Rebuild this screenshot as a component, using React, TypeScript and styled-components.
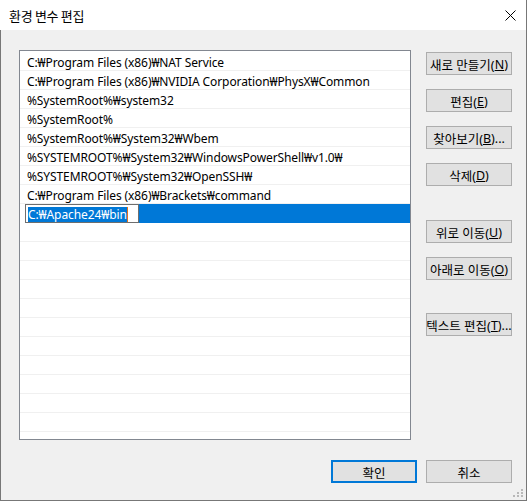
import React from "react";
import styled, { createGlobalStyle } from "styled-components";

const GlobalStyle = createGlobalStyle`
  html, body {
    margin: 0;
    padding: 0;
    background: #ffffff;
  }
  body {
    font-family: "Noto Sans", "Noto Sans CJK KR", sans-serif;
    font-size: 12px;
    color: #000000;
  }
`;

const paths = [
  "C:₩Program Files (x86)₩NAT Service",
  "C:₩Program Files (x86)₩NVIDIA Corporation₩PhysX₩Common",
  "%SystemRoot%₩system32",
  "%SystemRoot%",
  "%SystemRoot%₩System32₩Wbem",
  "%SYSTEMROOT%₩System32₩WindowsPowerShell₩v1.0₩",
  "%SYSTEMROOT%₩System32₩OpenSSH₩",
  "C:₩Program Files (x86)₩Brackets₩command",
];

type SideButton = { label: string; key: string; tail?: string; space: number };

const sideButtons: SideButton[] = [
  { label: "새로 만들기", key: "N", space: 0 },
  { label: "편집", key: "E", space: 14 },
  { label: "찾아보기", key: "B", tail: "...", space: 14 },
  { label: "삭제", key: "D", space: 14 },
  { label: "위로 이동", key: "U", space: 34 },
  { label: "아래로 이동", key: "O", space: 14 },
  { label: "텍스트 편집", key: "T", tail: "...", space: 33 },
];

export default function App() {
  const emptyRows = 13;
  return (
    <Window>
      <GlobalStyle />
      <TitleBar>
        <Title>환경 변수 편집</Title>
        <CloseIcon width="11" height="11" viewBox="0 0 11 11">
          <path d="M0.5 0.5 L10.5 10.5 M10.5 0.5 L0.5 10.5" stroke="#000" strokeWidth="1" />
        </CloseIcon>
      </TitleBar>
      <Body>
        <Main>
          <List>
            {paths.map((p) => (
              <Row key={p}>{p}</Row>
            ))}
            <SelectedRow>
              <EditBox>
                <Highlight>C:₩Apache24₩bin</Highlight>
                <Caret />
              </EditBox>
              <SelectionFill />
            </SelectedRow>
            {Array.from({ length: emptyRows }).map((_, i) => (
              <Row key={"e" + i} />
            ))}
          </List>
          <Side>
            {sideButtons.map((b) => (
              <Button key={b.key} $space={b.space}>
                {b.label}(<u>{b.key}</u>){b.tail}
              </Button>
            ))}
          </Side>
        </Main>
        <Footer>
          <Button $default>확인</Button>
          <Button>취소</Button>
        </Footer>
        <Grip width="11" height="9" viewBox="0 0 11 9">
          <rect x="8" y="0" width="2" height="2" fill="#b8b8b8" />
          <rect x="4" y="3" width="2" height="2" fill="#b8b8b8" />
          <rect x="8" y="3" width="2" height="2" fill="#b8b8b8" />
          <rect x="0" y="6" width="2" height="2" fill="#b8b8b8" />
          <rect x="4" y="6" width="2" height="2" fill="#b8b8b8" />
          <rect x="8" y="6" width="2" height="2" fill="#b8b8b8" />
        </Grip>
      </Body>
    </Window>
  );
}

const Window = styled.div`
  width: 527px;
  height: 501px;
  display: flex;
  flex-direction: column;
  box-sizing: border-box;
`;

const TitleBar = styled.div`
  height: 30px;
  flex: none;
  background: #ffffff;
  display: flex;
  align-items: center;
  justify-content: space-between;
  padding: 0 10px 0 9px;
  border-right: 1px solid #777777;
`;

const Title = styled.div`
  font-size: 13px;
  letter-spacing: -0.3px;
  padding-top: 1px;
  font-family: "Noto Sans CJK KR", sans-serif;
`;

const CloseIcon = styled.svg`
  display: block;
  margin-top: 1px;
`;

const Body = styled.div`
  position: relative;
  flex: 1;
  background: #f0f0f0;
  border: 1px solid #777777;
  border-top: none;
  padding: 20px 14px 0 18px;
  display: flex;
  flex-direction: column;
`;

const Main = styled.div`
  display: flex;
  gap: 15px;
`;

const List = styled.div`
  width: 390px;
  height: 387px;
  padding-top: 1px;
  border: 1px solid #828790;
  background: #ffffff;
  overflow: hidden;
`;

const Row = styled.div`
  height: 16px;
  padding-top: 2px;
  line-height: 17px;
  padding-left: 7px;
  border-bottom: 1px solid #f0f0f0;
  white-space: nowrap;
  overflow: hidden;
  letter-spacing: -0.1px;
`;

const SelectedRow = styled.div`
  height: 19px;
  display: flex;
  padding-left: 5px;
  background: #ffffff;
`;

const EditBox = styled.div`
  width: 114px;
  height: 19px;
  box-sizing: border-box;
  border: 1px solid #6e6e6e;
  background: #ffffff;
  display: flex;
  align-items: center;
  padding: 1px 0 0 2px;
`;

const Highlight = styled.span`
  background: #0078d7;
  color: #ffffff;
  line-height: 15px;
  white-space: nowrap;
  letter-spacing: -0.1px;
`;

const Caret = styled.span`
  width: 1px;
  height: 15px;
  background: #e0701e;
`;

const SelectionFill = styled.div`
  flex: 1;
  background: #0078d7;
`;

const Side = styled.div`
  display: flex;
  flex-direction: column;
  padding-top: 2px;
`;

const Button = styled.div<{ $space?: number; $default?: boolean }>`
  width: 86px;
  height: 23px;
  box-sizing: border-box;
  margin-top: ${(p) => p.$space ?? 0}px;
  background: #e1e1e1;
  border: ${(p) => (p.$default ? "2px solid #0078d7" : "1px solid #adadad")};
  display: flex;
  align-items: center;
  justify-content: center;
  white-space: nowrap;
  font-size: 12.5px;
  padding-top: 1px;
  u {
    text-decoration: underline;
    text-underline-offset: 1px;
  }
`;

const Footer = styled.div`
  display: flex;
  justify-content: flex-end;
  gap: 9px;
  margin-top: 20px;
`;

const Grip = styled.svg`
  position: absolute;
  right: 2px;
  bottom: 2px;
`;
